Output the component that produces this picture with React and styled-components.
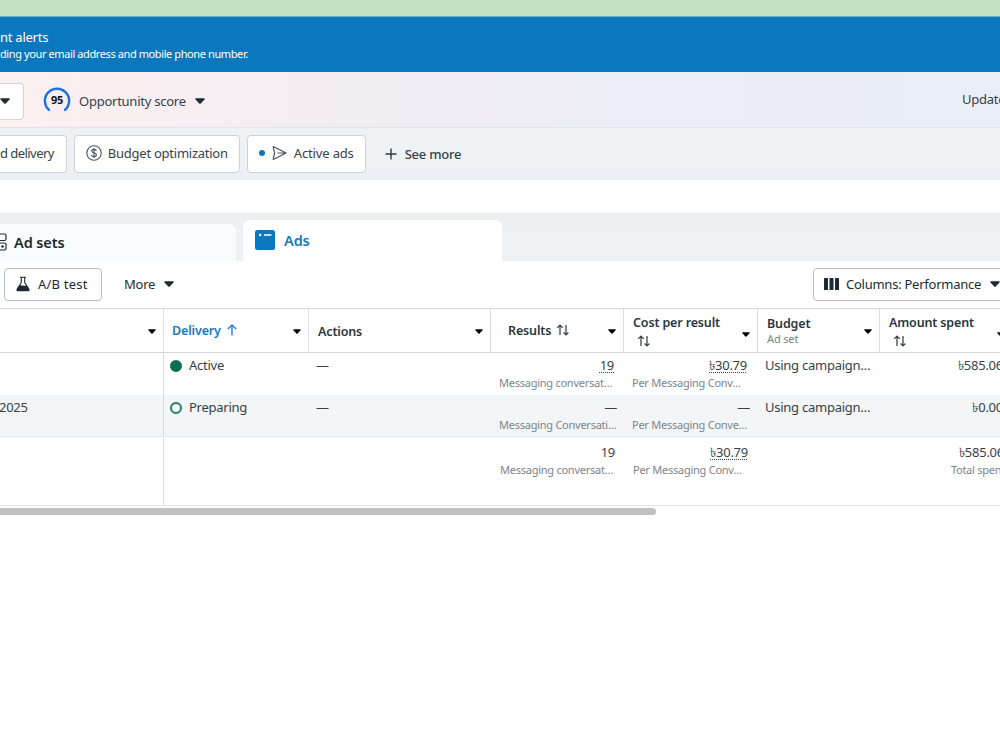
import styled, { createGlobalStyle } from 'styled-components'

const columns = [
  { key: 'name', caret: true },
  { key: 'delivery', title: 'Delivery', sorted: true, caret: true },
  { key: 'actions', title: 'Actions', caret: true },
  { key: 'results', title: 'Results', sort: 'inline', caret: true },
  { key: 'cost', title: 'Cost per result', sort: 'below', caret: true },
  { key: 'budget', title: 'Budget', note: 'Ad set', caret: true },
  { key: 'spent', title: 'Amount spent', sort: 'below', caret: true },
]

const rows = [
  {
    name: '',
    delivery: 'Active',
    live: true,
    results: '19',
    resultsNote: 'Messaging conversat…',
    cost: '৳30.79',
    costNote: 'Per Messaging Conv…',
    spent: '৳585.06',
  },
  {
    name: '2025',
    delivery: 'Preparing',
    results: '—',
    resultsNote: 'Messaging Conversati…',
    cost: '—',
    costNote: 'Per Messaging Conve…',
    spent: '৳0.00',
  },
]

const Caret = ({ small, color = '#1c2b33' }) => (
  <Icon width={small ? 8 : 10} height={small ? 5 : 6} viewBox="0 0 10 6">
    <path
      d="M1 0.3h8c.7 0 1 .7.5 1.2L5.7 5.6a1 1 0 0 1-1.4 0L.5 1.5C0 1 .3.3 1 .3z"
      fill={color}
    />
  </Icon>
)

const SortArrows = () => (
  <Icon width="14" height="12" viewBox="0 0 14 12">
    <path
      d="M4 11V1.2M1.2 3.9L4 1.1l2.8 2.8M10 1v9.8M7.6 8.5L10 10.9l2.4-2.4"
      fill="none"
      stroke="#3a474e"
      strokeWidth="1.3"
    />
  </Icon>
)

const UpArrow = () => (
  <Icon width="10" height="12" viewBox="0 0 10 12">
    <path
      d="M5 11.5V1.2M.8 5L5 1l4.2 4"
      fill="none"
      stroke="#2a7de1"
      strokeWidth="1.4"
    />
  </Icon>
)

const ScoreRing = () => (
  <Score>
    <Icon width="28" height="28" viewBox="0 0 28 28">
      <path
        d="M6 22.9A12.1 12.1 0 1 1 22 22.9"
        fill="none"
        stroke="#1f6fe5"
        strokeWidth="2.4"
        strokeLinecap="round"
      />
    </Icon>
    <ScoreValue>95</ScoreValue>
  </Score>
)

const DollarIcon = () => (
  <Icon width="16" height="16" viewBox="0 0 16 16" fill="none" stroke="#4a565d">
    <circle cx="8" cy="8" r="7.2" strokeWidth="1.1" />
    <path
      d="M10.3 6C10.2 5 9.3 4.4 8 4.4S5.7 5 5.7 6.1C5.7 8.5 10.4 7.3 10.4 9.8c0 1.1-1 1.8-2.4 1.8s-2.4-.7-2.5-1.8M8 3v10"
      strokeWidth="1.1"
    />
  </Icon>
)

const SendIcon = () => (
  <Icon width="15" height="14" viewBox="0 0 15 14" fill="none" stroke="#4a565d">
    <path
      d="M1.2 1.1Q.9.5 1.8.8L14 7 1.8 13.2Q.9 13.5 1.2 12.9L2.6 7zM5.5 7H14"
      strokeWidth="1.2"
      strokeLinejoin="round"
    />
  </Icon>
)

const PlusIcon = () => (
  <Icon width="12" height="12" viewBox="0 0 12 12">
    <path d="M6 .5v11M.5 6h11" stroke="#2f3c43" strokeWidth="1.4" />
  </Icon>
)

const GridIcon = () => (
  <Icon width="7" height="18" viewBox="0 0 7 18" fill="none" stroke="#1c2b33">
    <rect x="-3" y="1" width="9" height="6.5" rx="1.5" strokeWidth="1.2" />
    <rect x="-1" y="10" width="7" height="7" rx="1.5" strokeWidth="1.2" />
    <circle cx="2.5" cy="13.5" r="1.3" fill="#1c2b33" stroke="none" />
  </Icon>
)

const AdIcon = () => (
  <Icon width="20" height="20" viewBox="0 0 20 20">
    <rect width="20" height="20" rx="2.5" fill="#0a78be" />
    <circle cx="5.2" cy="5" r="1.2" fill="#fff" />
    <path d="M9 5h7.5" stroke="#fff" strokeWidth="1.5" />
  </Icon>
)

const FlaskIcon = () => (
  <Icon width="14" height="16" viewBox="0 0 14 16">
    <path
      d="M4 1.2h6M5.3 1v5.5L1.3 13M8.7 1v5.5l4 6.5"
      stroke="#1c2b33"
      strokeWidth="1.1"
      fill="none"
    />
    <path
      d="M3.2 9.6c1.8-.9 3.7.8 7.4-.2l2.8 3.8c.7 1 .1 2-1 2H1.6c-1.1 0-1.7-1-1-2z"
      fill="#1c2b33"
    />
  </Icon>
)

const ColumnsIcon = () => (
  <Icon width="15" height="12" viewBox="0 0 15 12" fill="#1c2b33">
    <rect width="4" height="12" rx=".5" />
    <rect x="5.5" width="4" height="12" rx=".5" />
    <rect x="11" width="4" height="12" rx=".5" />
  </Icon>
)

const HeaderCell = ({ column }) => (
  <HeadCell $col={column.key}>
    <HeadText>
      <HeadTitle $active={column.sorted}>
        {column.title}
        {column.sorted && <UpArrow />}
        {column.sort === 'inline' && <SortArrows />}
      </HeadTitle>
      {column.sort === 'below' && (
        <SortLine>
          <SortArrows />
        </SortLine>
      )}
      {column.note && <HeadNote>{column.note}</HeadNote>}
    </HeadText>
    {column.caret && (
      <CaretSlot $low={column.sort === 'below'}>
        <Caret small color="#000" />
      </CaretSlot>
    )}
  </HeadCell>
)

export default function App() {
  return (
    <Page>
      <GlobalStyle />
      <BrowserStrip />
      <Banner>
        <BannerTitle>nt alerts</BannerTitle>
        <BannerText>ding your email address and mobile phone number.</BannerText>
      </Banner>

      <AccountBar>
        <AccountSelect>
          <Caret />
        </AccountSelect>
        <ScoreRing />
        <Label>Opportunity score</Label>
        <Caret />
        <Updated>Updated</Updated>
      </AccountBar>

      <FilterBar>
        <Filter $cut>d delivery</Filter>
        <Filter>
          <DollarIcon />
          Budget optimization
        </Filter>
        <Filter $tight>
          <Dot />
          <SendIcon />
          Active ads
        </Filter>
        <SeeMore>
          <PlusIcon />
          See more
        </SeeMore>
      </FilterBar>

      <SearchGap />

      <Tabs>
        <Tab>
          <GridIcon />
          Ad sets
        </Tab>
        <Tab $active>
          <AdIcon />
          Ads
        </Tab>
      </Tabs>

      <Toolbar>
        <ToolButton $wide>
          <FlaskIcon />
          A/B test
        </ToolButton>
        <MoreButton>
          More
          <Caret />
        </MoreButton>
        <ColumnsButton>
          <ColumnsIcon />
          Columns: Performance
          <Caret />
        </ColumnsButton>
      </Toolbar>

      <HeadRow>
        {columns.map((column) => (
          <HeaderCell key={column.key} column={column} />
        ))}
      </HeadRow>
      {rows.map((row, i) => (
        <BodyRow key={row.delivery} $shaded={i === 1}>
          <NameCell>{row.name}</NameCell>
          <StatusCell>
            <Status $live={row.live} />
            {row.delivery}
          </StatusCell>
          <Cell $pad={7}>—</Cell>
          <NumberCell>
            <Value $inset={row.live ? 10 : 7} $dotted={row.live}>
              {row.results}
            </Value>
            <Note>{row.resultsNote}</Note>
          </NumberCell>
          <NumberCell>
            <Value $inset={row.live ? 11 : 8} $dotted={row.live}>
              {row.cost}
            </Value>
            <Note>{row.costNote}</Note>
          </NumberCell>
          <Cell $pad={7}>Using campaign…</Cell>
          <NumberCell>
            <Value $inset={10}>{row.spent}</Value>
          </NumberCell>
        </BodyRow>
      ))}
      <TotalRow>
        <NameCell />
        <Cell />
        <Cell />
        <NumberCell>
          <Value $inset={9}>19</Value>
          <Note $total>Messaging conversat…</Note>
        </NumberCell>
        <NumberCell>
          <Value $inset={10} $dotted>
            ৳30.79
          </Value>
          <Note $total>Per Messaging Conv…</Note>
        </NumberCell>
        <Cell />
        <NumberCell>
          <Value $inset={9}>৳585.06</Value>
          <Note $end>Total spent</Note>
        </NumberCell>
      </TotalRow>
      <ScrollTrack>
        <ScrollThumb />
      </ScrollTrack>
    </Page>
  )
}

const GlobalStyle = createGlobalStyle`
  body {
    margin: 0;
    background: white;
    overflow: hidden;
  }
  * {
    box-sizing: border-box;
  }
`

const Page = styled.div`
  width: 1000px;
  height: 750px;
  overflow: hidden;
  background: white;
  color: #35424a;
  font-family: 'Noto Sans', 'Open Sans', sans-serif;
  font-size: 13px;
  letter-spacing: -0.25px;
  line-height: 18px;
  white-space: nowrap;
`

const Icon = styled.svg`
  display: block;
  flex: none;
`

const BrowserStrip = styled.div`
  height: 17px;
  background: #c5e2c5;
  border-bottom: 1px solid #6fb0c0;
`

const Banner = styled.div`
  height: 55px;
  padding-top: 11px;
  background: #0a78be;
  color: white;
`
const BannerTitle = styled.div`
  line-height: 18px;
`
const BannerText = styled.div`
  font-size: 11px;
  letter-spacing: -0.4px;
  line-height: 15px;
`

const AccountBar = styled.div`
  display: flex;
  align-items: center;
  height: 56px;
  background: linear-gradient(90deg, #fcf0f0 0%, #f3edf3 33%, #ebedf7 70%, #e9eef8 100%);
  border-bottom: 1px solid #e2e4ea;
`
const AccountSelect = styled.div`
  display: flex;
  align-items: center;
  width: 24px;
  height: 37px;
  margin: 3px 19px 0 0;
  background: white;
  border: 1px solid #cfd5da;
  border-left: none;
  border-radius: 0 4px 4px 0;
`
const Score = styled.div`
  position: relative;
  width: 28px;
  height: 28px;
  margin: 3px 8px 0 0;
`
const ScoreValue = styled.span`
  position: absolute;
  inset: 0;
  color: #111;
  font-size: 11px;
  font-weight: 700;
  line-height: 25px;
  text-align: center;
`
const Label = styled.span`
  margin: 3px 9px 0 0;

  & + svg {
    margin-top: 3px;
  }
`
const Updated = styled.span`
  width: 38px;
  margin-left: auto;
  padding-bottom: 1px;
`

const FilterBar = styled.div`
  display: flex;
  align-items: center;
  gap: 7px;
  height: 52px;
  background: linear-gradient(#eff2f5 70%, #ebeef3);
`
const Filter = styled.div`
  display: flex;
  align-items: center;
  gap: ${({ $tight }) => ($tight ? '7px' : '6px')};
  height: 38px;
  padding: ${({ $cut }) => ($cut ? '0 12px 2px 0' : '0 11px 2px')};
  background: white;
  border: 1px solid #ccd3d8;
  border-left-width: ${({ $cut }) => ($cut ? 0 : '1px')};
  border-radius: ${({ $cut }) => ($cut ? '0 4px 4px 0' : '4px')};
  letter-spacing: ${({ $cut, $tight }) =>
    $cut ? '-0.55px' : $tight ? '-0.15px' : '-0.25px'};
`
const Dot = styled.span`
  width: 6px;
  height: 6px;
  border-radius: 50%;
  background: #0a78be;
`
const SeeMore = styled.div`
  display: flex;
  align-items: center;
  gap: 8px;
  margin-left: 12px;
  font-weight: 500;
`

const SearchGap = styled.div`
  height: 33px;
`

const Tabs = styled.div`
  display: flex;
  align-items: flex-end;
  gap: 7px;
  height: 48px;
  background: linear-gradient(#ebeef1, #eff2f5 30%);
`
const Tab = styled.div`
  display: flex;
  align-items: center;
  gap: ${({ $active }) => ($active ? '9px' : '7px')};
  width: ${({ $active }) => ($active ? '259px' : '236px')};
  height: ${({ $active }) => ($active ? '41px' : '37px')};
  padding: 0 0 2px ${({ $active }) => ($active ? '12px' : 0)};
  background: ${({ $active }) => ($active ? 'white' : '#fafbfd')};
  color: ${({ $active }) => ($active ? '#1879bd' : '#1c2b33')};
  border-radius: ${({ $active }) => ($active ? '6px 6px 0 0' : '0 6px 0 0')};
  font-size: 14.5px;
  font-weight: 600;
  letter-spacing: -0.1px;
  box-shadow: 0 0 2px rgba(0, 0, 0, 0.06);
`

const Toolbar = styled.div`
  display: flex;
  align-items: center;
  height: 47px;
`
const ToolButton = styled.div`
  display: flex;
  align-items: center;
  gap: 8px;
  width: 98px;
  height: 33px;
  margin-left: 4px;
  padding: 0 0 2px 11px;
  border: 1px solid #b9c0c5;
  border-radius: 4px;
  color: #1c2b33;
  letter-spacing: ${({ $wide }) => ($wide ? '0.2px' : '-0.25px')};
`
const MoreButton = styled.div`
  display: flex;
  align-items: center;
  gap: 9px;
  margin-left: 22px;
  padding-bottom: 2px;
  color: #1c2b33;
`
const ColumnsButton = styled(ToolButton)`
  gap: 7px;
  width: 200px;
  margin: 0 -13px 0 auto;
  padding-left: 10px;

  & > :last-child {
    margin-left: 2px;
  }
`

const Row = styled.div`
  display: grid;
  grid-template-columns: 164px 145px 182px 133px 134px 122px 133px;
`
const HeadRow = styled(Row)`
  height: 45px;
  border-top: 1px solid #d3d6d9;
  border-bottom: 1px solid #d3d6d9;
`
const headPads = {
  name: '0',
  delivery: '0 0 1px 8px',
  actions: '1px 0 0 9px',
  results: '0 0 1px 17px',
  cost: '2px 0 0 9px',
  budget: '0 0 0 9px',
  spent: '2px 0 0 9px',
}
const HeadCell = styled.div`
  display: flex;
  align-items: center;
  justify-content: space-between;
  border-right: 1px solid #dcdfe2;
  & > :first-child {
    padding: ${({ $col }) => headPads[$col]};
  }
`
const HeadText = styled.div`
  font-size: 12.5px;
  letter-spacing: -0.15px;
  line-height: 17px;
`
const HeadTitle = styled.div`
  display: flex;
  align-items: center;
  gap: ${({ $active }) => ($active ? '6px' : '5px')};
  color: ${({ $active }) => ($active ? '#1879c4' : '#2a373e')};
  font-weight: 600;
`
const SortLine = styled.div`
  display: flex;
  align-items: center;
  height: 18px;
  padding: 1px 0 0 4px;
`
const HeadNote = styled.div`
  color: #77838a;
  font-size: 11px;
  line-height: 14px;
`
const CaretSlot = styled.div`
  padding: ${({ $low }) => ($low ? '7px' : '2px')} 7px 0 0;
`

const BodyRow = styled(Row)`
  height: 42px;
  background: ${({ $shaded }) => ($shaded ? '#f4f5f7' : 'white')};
  border-bottom: ${({ $shaded }) => ($shaded ? '1px solid #e8eaec' : 'none')};
`
const TotalRow = styled(Row)`
  height: 69px;
  border-bottom: 1px solid #e6e8ea;
  & > div {
    padding-top: 6px;
  }
`
const Cell = styled.div`
  padding: 3px 0 0 ${({ $pad }) => $pad || 0}px;
`
const NameCell = styled(Cell)`
  border-right: 1px solid #d9dcdf;
  text-indent: -1px;
`
const StatusCell = styled(Cell)`
  display: flex;
  align-items: flex-start;
  gap: 7px;
  padding-left: 6px;
`
const Status = styled.span`
  width: 12px;
  height: 12px;
  margin-top: 4px;
  border: 2px solid ${({ $live }) => ($live ? '#0a7050' : '#1a8060')};
  border-radius: 50%;
  background: ${({ $live }) => ($live ? '#0a7050' : 'white')};
`
const NumberCell = styled(Cell)`
  display: flex;
  flex-direction: column;
  min-width: 0;
`
const Value = styled.div`
  align-self: flex-end;
  margin-right: ${({ $inset }) => $inset}px;
  text-decoration: ${({ $dotted }) => ($dotted ? 'underline dotted 1px' : 'none')};
  text-underline-offset: 2px;
`
const Note = styled.div`
  align-self: ${({ $end }) => ($end ? 'flex-end' : 'flex-start')};
  margin-left: ${({ $total }) => ($total ? '9px' : '8px')};
  margin-right: ${({ $end }) => ($end ? '8px' : 0)};
  color: #7a858b;
  font-size: 11px;
`

const ScrollTrack = styled.div`
  padding-top: 2px;
`
const ScrollThumb = styled.div`
  width: 656px;
  height: 7px;
  background: #c1c1c1;
  border-radius: 0 4px 4px 0;
`
